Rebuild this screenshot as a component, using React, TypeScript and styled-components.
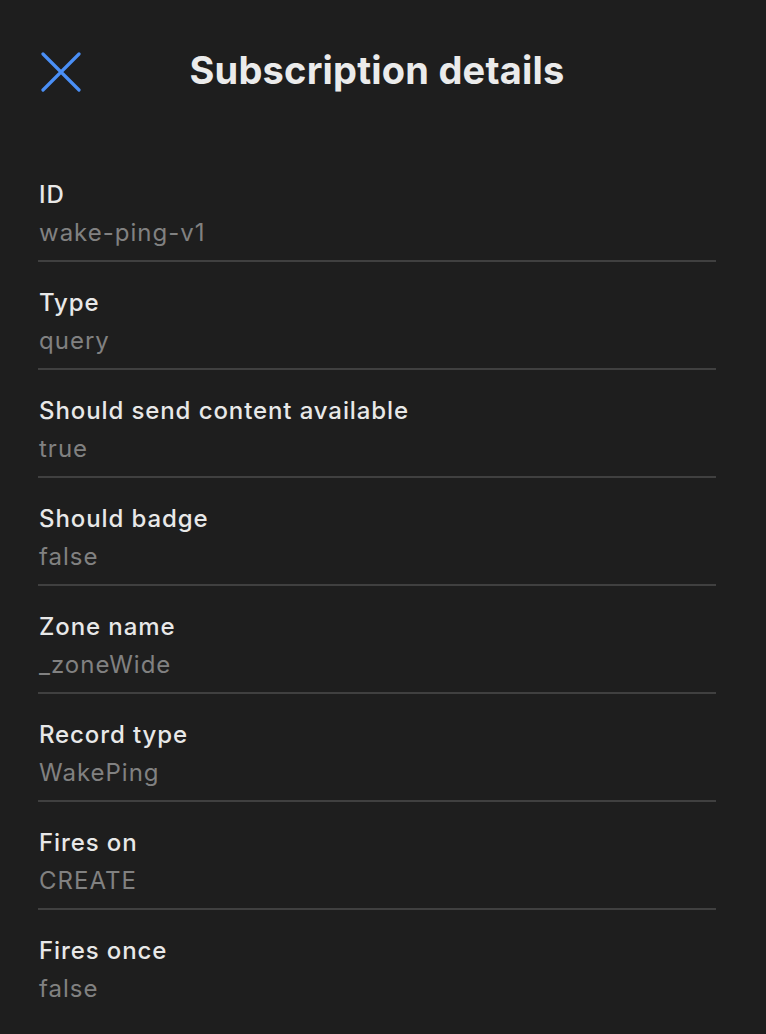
import React from 'react';
import styled, { createGlobalStyle } from 'styled-components';

interface IDetail {
  label: string;
  value: string;
}

const details: IDetail[] = [
  { label: 'ID', value: 'wake-ping-v1' },
  { label: 'Type', value: 'query' },
  { label: 'Should send content available', value: 'true' },
  { label: 'Should badge', value: 'false' },
  { label: 'Zone name', value: '_zoneWide' },
  { label: 'Record type', value: 'WakePing' },
  { label: 'Fires on', value: 'CREATE' },
  { label: 'Fires once', value: 'false' },
];

const GlobalStyle = createGlobalStyle`
  html, body {
    margin: 0;
    padding: 0;
    background-color: #1e1e1e;
  }
  body {
    font-family: Inter, "Noto Sans", "Liberation Sans", sans-serif;
    -webkit-font-smoothing: antialiased;
  }
`;

const Page = styled.div`
  width: 766px;
  min-height: 1034px;
  background-color: #1e1e1e;
  overflow: hidden;
`;

const Header = styled.header`
  height: 154px;
  display: grid;
  grid-template-columns: 114px 1fr 126px;
  align-items: start;
  padding-top: 51px;
  box-sizing: border-box;
`;

const CloseButton = styled.button`
  width: 42px;
  height: 42px;
  margin-left: 40px;
  padding: 0;
  border: none;
  background: none;
  cursor: pointer;
  display: flex;
  align-items: center;
  justify-content: center;
`;

const Title = styled.h1`
  margin: 0;
  text-align: center;
  font-size: 38px;
  line-height: 38px;
  font-weight: 700;
  color: #ebebeb;
  letter-spacing: 0.2px;
`;

const List = styled.dl`
  margin: 0;
  padding: 0 50px 0 38px;
`;

const Row = styled.div<{ last: boolean }>`
  padding: 22px 0 ${(props) => (props.last ? '0' : '8px')} 1px;
  border-bottom: ${(props) => (props.last ? 'none' : '2px solid #404040')};
`;

const Label = styled.dt`
  font-size: 24px;
  line-height: 38px;
  font-weight: 500;
  color: #e8e8e8;
  letter-spacing: 0.9px;
`;

const Value = styled.dd`
  margin: 0;
  font-size: 24px;
  line-height: 38px;
  font-weight: 400;
  color: #818181;
  letter-spacing: 1px;
`;

const CloseIcon: React.FC = () => (
  <svg width="40" height="40" viewBox="0 0 40 40" fill="none">
    <path d="M2 2 L38 38 M38 2 L2 38" stroke="#4a8ff6" strokeWidth="3.2" strokeLinecap="round" />
  </svg>
);

const App: React.FC = () => (
  <Page>
    <GlobalStyle />
    <Header>
      <CloseButton type="button" aria-label="Close">
        <CloseIcon />
      </CloseButton>
      <Title>Subscription details</Title>
      <div />
    </Header>
    <List>
      {details.map((item, i) => (
        <Row key={item.label} last={i === details.length - 1}>
          <Label>{item.label}</Label>
          <Value>{item.value}</Value>
        </Row>
      ))}
    </List>
  </Page>
);

export default App;
